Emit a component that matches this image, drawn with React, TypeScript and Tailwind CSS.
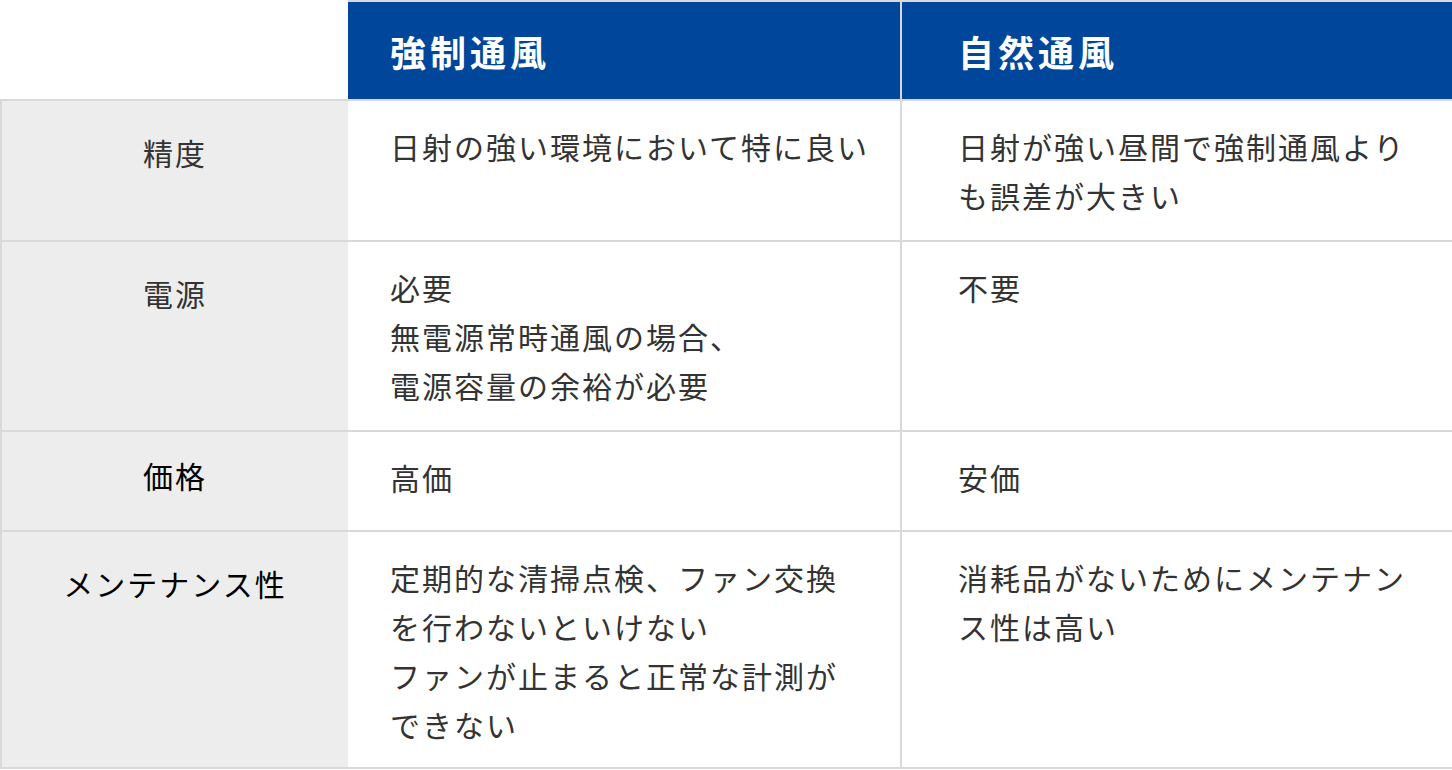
const rows = [
  {
    label: '精度',
    labelClass: 'text-[#333] pt-[27px]',
    height: 'h-[141px]',
    a: ['日射の強い環境において特に良い'],
    b: ['日射が強い昼間で強制通風より', 'も誤差が大きい'],
  },
  {
    label: '電源',
    labelClass: 'text-[#333] pt-[27px]',
    height: 'h-[190px]',
    a: ['必要', '無電源常時通風の場合、', '電源容量の余裕が必要'],
    b: ['不要'],
  },
  {
    label: '価格',
    labelClass: 'text-black pt-[19px]',
    height: 'h-[100px]',
    a: ['高価'],
    b: ['安価'],
  },
  {
    label: 'メンテナンス性',
    labelClass: 'text-black pt-[27px]',
    height: 'h-[237px]',
    a: ['定期的な清掃点検、ファン交換', 'を行わないといけない', 'ファンが止まると正常な計測が', 'できない'],
    b: ['消耗品がないためにメンテナン', 'ス性は高い'],
  },
];

export default function App() {
  return (
    <div className="w-[1452px] h-[770px] bg-white font-['Noto_Sans_CJK_JP','Noto_Sans',sans-serif] overflow-hidden">
      {/* Header */}
      <div className="flex h-[101px] border-b-2 border-[#d9d9d9]">
        <div className="w-[348px] shrink-0" />
        <div className="w-[554px] shrink-0 flex items-center bg-[#00469a] border-t-2 border-r-2 border-[#d9d9d9] pl-[42px]">
          <span className="text-white text-[36px] font-bold tracking-[4px] leading-none">強制通風</span>
        </div>
        <div className="flex-1 flex items-center bg-[#00469a] border-t-2 border-[#d9d9d9] pl-[56px]">
          <span className="text-white text-[36px] font-bold tracking-[4px] leading-none">自然通風</span>
        </div>
      </div>

      {/* Body */}
      {rows.map((row) => (
        <div key={row.label} className={`flex border-b-2 border-[#d9d9d9] ${row.height}`}>
          <div className="w-[348px] shrink-0 bg-[#ecedec] border-l-2 border-[#d9d9d9]">
            <div className={`text-center text-[30px] leading-[49px] tracking-[2px] ${row.labelClass}`}>
              {row.label}
            </div>
          </div>
          <div className="w-[554px] shrink-0 border-r-2 border-[#d9d9d9] pl-[42px] pt-[21px] text-[#333] text-[30px] leading-[49px] tracking-[2px]">
            {row.a.map((line) => (
              <div key={line} className="whitespace-nowrap">{line}</div>
            ))}
          </div>
          <div className="flex-1 pl-[56px] pt-[21px] text-[#333] text-[30px] leading-[49px] tracking-[2px]">
            {row.b.map((line) => (
              <div key={line} className="whitespace-nowrap">{line}</div>
            ))}
          </div>
        </div>
      ))}
    </div>
  );
}
